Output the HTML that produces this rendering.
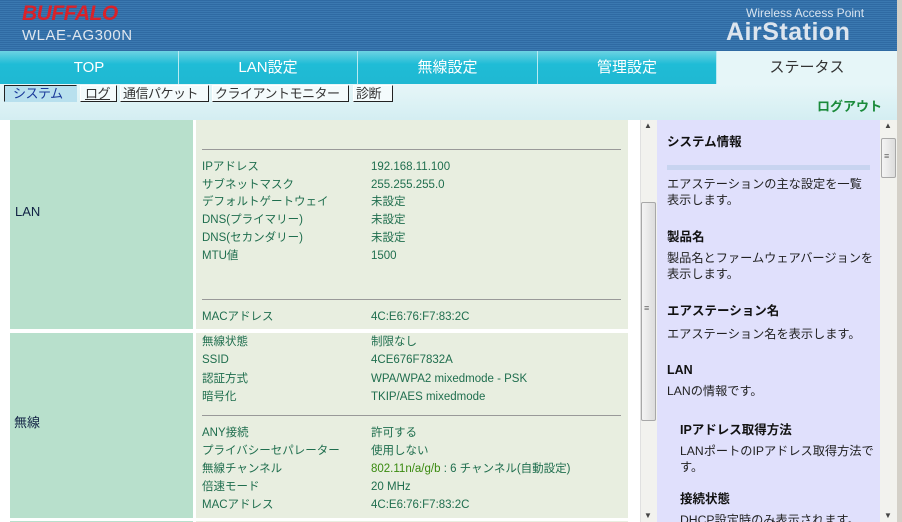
<!DOCTYPE html>
<html><head><meta charset="utf-8"><style>
*{margin:0;padding:0;box-sizing:border-box}
html,body{width:902px;height:522px;overflow:hidden}
body{position:relative;background:#d4d0c8;font-family:"Liberation Sans","Noto Sans CJK JP",sans-serif}
.a{position:absolute}
#hdr{left:0;top:0;width:897px;height:51px;background:repeating-linear-gradient(180deg,#2f6aa3 0,#2f6aa3 1px,#3a78b0 1px,#3a78b0 2px)}
#nav{left:0;top:51px;width:897px;height:33px;background:linear-gradient(180deg,#6dd3e3,#1fbcd6 40%,#1fb8d2)}
.tab{position:absolute;top:0;height:33px;line-height:33px;text-align:center;color:#fff;font-size:15px;border-left:1px solid #b8eaf2;white-space:nowrap}
#sub{left:0;top:84px;width:897px;height:36px;background:linear-gradient(180deg,#e6f6f8,#d4eef2)}
.st{position:absolute;top:85px;height:17px;line-height:15px;font-size:13px;color:#333;background:#f4fbfc;border:1px solid;border-color:#fff #222 #222 #fff;padding-left:2px;white-space:nowrap;overflow:hidden;letter-spacing:-0.5px}
.l{position:absolute;font-size:11.5px;line-height:14px;color:#1f6e4e;white-space:nowrap}
.r{position:absolute;font-size:12.2px;line-height:16px;color:#222;white-space:nowrap}
.rb{position:absolute;font-size:12.5px;line-height:16px;color:#111;font-weight:bold;white-space:nowrap}
.hr{position:absolute;height:1px;background:#999;left:202px;width:419px}
</style></head><body>
<div id="hdr" class="a"></div>
<div class="a" style="left:22px;top:3px;font-size:21px;line-height:22px;font-weight:bold;font-style:italic;color:#d8222a;letter-spacing:-0.5px">BUFFALO</div>
<div class="a" style="left:22px;top:28px;font-size:15px;line-height:16px;color:#dfe6ee;letter-spacing:0.5px">WLAE-AG300N</div>
<div class="a" style="left:746px;top:6px;font-size:12px;line-height:14px;color:#d8e4f0">Wireless Access Point</div>
<div class="a" style="left:726px;top:19px;font-size:25px;line-height:26px;font-weight:bold;color:#dde5ee;letter-spacing:0.5px">AirStation</div>
<div id="nav" class="a">
<div class="tab" style="left:0;width:178px;border-left:none">TOP</div>
<div class="tab" style="left:178px;width:179px">LAN設定</div>
<div class="tab" style="left:357px;width:180px">無線設定</div>
<div class="tab" style="left:537px;width:179px">管理設定</div>
<div class="tab" style="left:716px;width:181px;background:#e6f6f8;color:#333">ステータス</div>
</div>
<div id="sub" class="a"></div>
<div class="st" style="left:4px;width:73px;background:#b8e0ee;color:#1a3a9a;border-color:#222 #b8e0ee #b8e0ee #222;padding-left:8px">システム</div>
<div class="st" style="left:80px;width:37px;text-decoration:underline;padding-left:4px">ログ</div>
<div class="st" style="left:120px;width:89px">通信パケット</div>
<div class="st" style="left:212px;width:137px">クライアントモニター</div>
<div class="st" style="left:353px;width:40px">診断</div>
<div class="a" style="left:817px;top:99px;font-size:13px;line-height:16px;font-weight:bold;color:#1a8a3a">ログアウト</div>

<div class="a" style="left:0;top:120px;width:640px;height:402px;background:#fff"></div>
<div class="a" style="left:10px;top:120px;width:183px;height:209px;background:#b8e0cc"></div>
<div class="a" style="left:196px;top:120px;width:432px;height:209px;background:#e8eee0"></div>
<div class="a" style="left:10px;top:333px;width:183px;height:185px;background:#b8e0cc"></div>
<div class="a" style="left:196px;top:333px;width:432px;height:185px;background:#e8eee0"></div>
<div class="a" style="left:10px;top:521px;width:183px;height:2px;background:#b8e0cc"></div>
<div class="a" style="left:196px;top:521px;width:432px;height:2px;background:#e8eee0"></div>
<div class="a" style="left:15px;top:204px;font-size:13px;line-height:16px;color:#124">LAN</div>
<div class="a" style="left:14px;top:415px;font-size:13px;line-height:16px;color:#124">無線</div>
<div class="hr" style="top:149px"></div>
<div class="l" style="left:202px;top:160px">IPアドレス</div><div class="l" style="left:371px;top:160px">192.168.11.100</div>
<div class="l" style="left:202px;top:178px">サブネットマスク</div><div class="l" style="left:371px;top:178px">255.255.255.0</div>
<div class="l" style="left:202px;top:195px">デフォルトゲートウェイ</div><div class="l" style="left:371px;top:195px">未設定</div>
<div class="l" style="left:202px;top:213px">DNS(プライマリー)</div><div class="l" style="left:371px;top:213px">未設定</div>
<div class="l" style="left:202px;top:231px">DNS(セカンダリー)</div><div class="l" style="left:371px;top:231px">未設定</div>
<div class="l" style="left:202px;top:249px">MTU値</div><div class="l" style="left:371px;top:249px">1500</div>
<div class="hr" style="top:299px"></div>
<div class="l" style="left:202px;top:310px">MACアドレス</div><div class="l" style="left:371px;top:310px">4C:E6:76:F7:83:2C</div>
<div class="l" style="left:202px;top:335px">無線状態</div><div class="l" style="left:371px;top:335px">制限なし</div>
<div class="l" style="left:202px;top:353px">SSID</div><div class="l" style="left:371px;top:353px">4CE676F7832A</div>
<div class="l" style="left:202px;top:372px">認証方式</div><div class="l" style="left:371px;top:372px">WPA/WPA2 mixedmode - PSK</div>
<div class="l" style="left:202px;top:390px">暗号化</div><div class="l" style="left:371px;top:390px">TKIP/AES mixedmode</div>
<div class="hr" style="top:415px"></div>
<div class="l" style="left:202px;top:426px">ANY接続</div><div class="l" style="left:371px;top:426px">許可する</div>
<div class="l" style="left:202px;top:444px">プライバシーセパレーター</div><div class="l" style="left:371px;top:444px">使用しない</div>
<div class="l" style="left:202px;top:462px">無線チャンネル</div><div class="l" style="left:371px;top:462px"><span style="color:#3a8a10">802.11n/a/g/b</span> : 6 チャンネル(自動設定)</div>
<div class="l" style="left:202px;top:480px">倍速モード</div><div class="l" style="left:371px;top:480px">20 MHz</div>
<div class="l" style="left:202px;top:498px">MACアドレス</div><div class="l" style="left:371px;top:498px">4C:E6:76:F7:83:2C</div>

<div class="a" style="left:640px;top:120px;width:17px;height:402px;background:#f2f2ee;border-left:1px solid #e0e0e0"></div>
<div class="a" style="left:641px;top:202px;width:15px;height:219px;background:linear-gradient(90deg,#f4f4f4,#dcdcdc);border:1px solid #a8a8a8;border-radius:2px"></div>
<div class="a" style="left:644px;top:303px;font-size:9px;line-height:10px;color:#666">≡</div>
<div class="a" style="left:644px;top:121px;font-size:8px;line-height:10px;color:#444">▲</div>
<div class="a" style="left:644px;top:511px;font-size:8px;line-height:10px;color:#444">▼</div>

<div class="a" style="left:657px;top:120px;width:223px;height:402px;background:#e0e0fc"></div>
<div class="a" style="left:667px;top:165px;width:203px;height:5px;background:#c8d4f0"></div>
<div class="rb" style="left:667px;top:134px">システム情報</div>
<div class="r" style="left:667px;top:176px">エアステーションの主な設定を一覧</div>
<div class="r" style="left:667px;top:192px">表示します。</div>
<div class="rb" style="left:667px;top:229px">製品名</div>
<div class="r" style="left:667px;top:250px">製品名とファームウェアバージョンを</div>
<div class="r" style="left:667px;top:266px">表示します。</div>
<div class="rb" style="left:667px;top:303px">エアステーション名</div>
<div class="r" style="left:667px;top:326px">エアステーション名を表示します。</div>
<div class="rb" style="left:667px;top:362px">LAN</div>
<div class="r" style="left:667px;top:383px">LANの情報です。</div>
<div class="rb" style="left:680px;top:422px">IPアドレス取得方法</div>
<div class="r" style="left:680px;top:443px">LANポートのIPアドレス取得方法で</div>
<div class="r" style="left:680px;top:459px">す。</div>
<div class="rb" style="left:680px;top:491px">接続状態</div>
<div class="r" style="left:680px;top:512px">DHCP設定時のみ表示されます。</div>

<div class="a" style="left:880px;top:120px;width:17px;height:402px;background:#f2f2ee"></div>
<div class="a" style="left:881px;top:138px;width:15px;height:40px;background:linear-gradient(90deg,#f4f4f4,#dcdcdc);border:1px solid #a8a8a8;border-radius:2px"></div>
<div class="a" style="left:884px;top:151px;font-size:9px;line-height:10px;color:#666">≡</div>
<div class="a" style="left:884px;top:121px;font-size:8px;line-height:10px;color:#444">▲</div>
<div class="a" style="left:884px;top:511px;font-size:8px;line-height:10px;color:#444">▼</div>
</body></html>
